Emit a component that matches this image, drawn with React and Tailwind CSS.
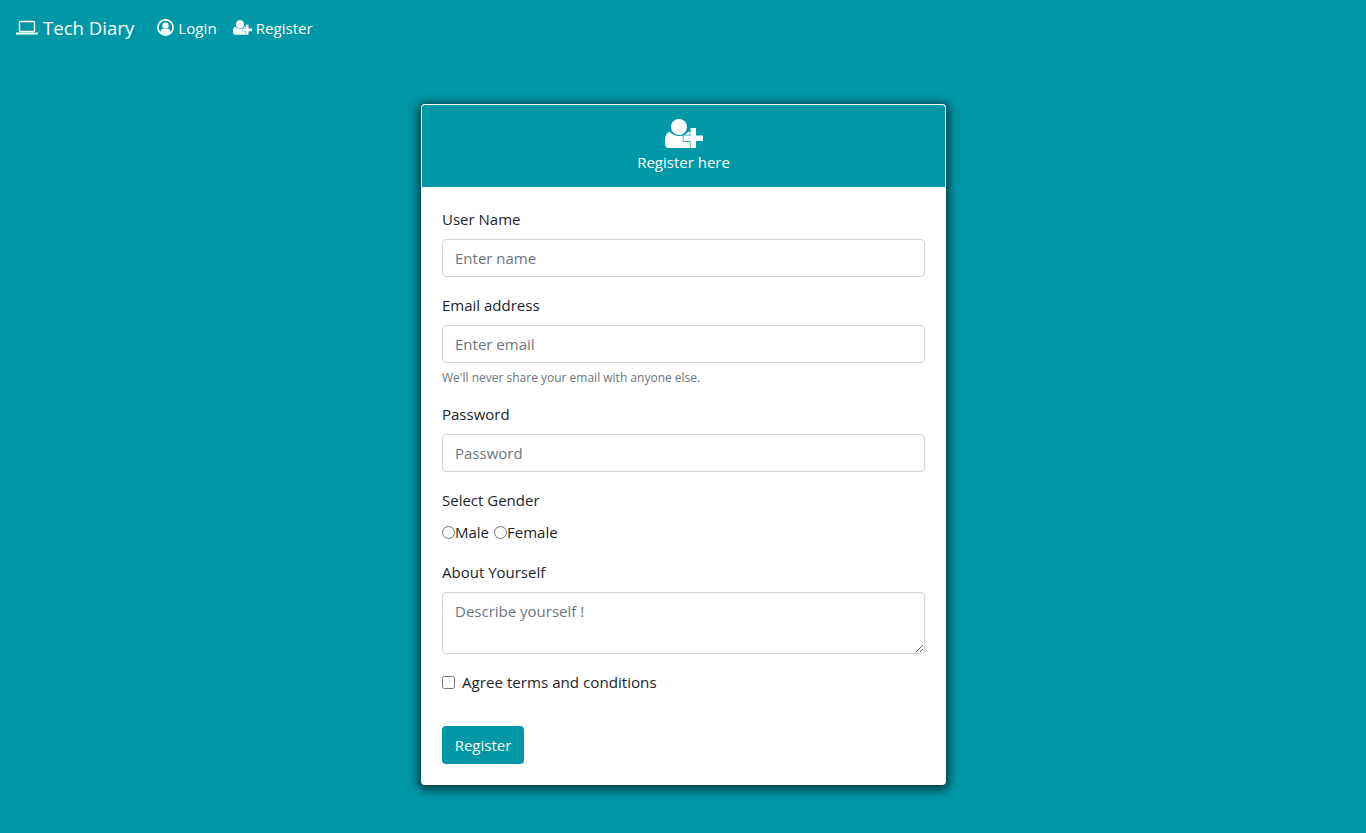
import React from "react";

const font = { fontFamily: '"Open Sans", "Noto Sans", sans-serif' };

function Laptop({ className }) {
  return (
    <svg viewBox="0 0 22 16" className={className} fill="none" stroke="currentColor">
      <rect x="3.5" y="1.5" width="15" height="10" rx="1" strokeWidth="1.4" />
      <path d="M0.5 13.5h21" strokeWidth="2" strokeLinecap="round" />
    </svg>
  );
}

function UserCircle({ className }) {
  return (
    <svg viewBox="0 0 17 17" className={className}>
      <circle cx="8.500" cy="8.500" r="7.600" fill="none" stroke="white" strokeWidth="1.600" />
      <circle cx="8.500" cy="6.600" r="3.200" fill="white" />
      <path d="M3.200 13.200c.5-2.300 2-3.500 3.200-3.700.6.400 1.300.6 2.100.6s1.500-.2 2.100-.6c1.200.2 2.700 1.400 3.200 3.700-1.300 1.400-3.200 2.300-5.300 2.300s-4-.9-5.300-2.300z" fill="white" />
    </svg>
  );
}

function UserPlus({ className }) {
  return (
    <svg viewBox="0 0 38 29" className={className}>
      <circle cx="14" cy="8" r="8" fill="white" />
      <path d="M4.5 12.5C6.5 15 9.5 17 14 17s7.5-2 9.5-4.5c2.5.6 4 3 4 6V29H4C1.500 29 0 27.500 0 25v-4c0-4 1.500-7 4.500-8.500z" fill="white" />
      <path d="M25.500 9h5.500v7.500h7v5.500h-7v7h-5.500v-7h-7v-5.500h7z" fill="white" stroke="#0097a7" strokeWidth="1.300" paintOrder="stroke" />
    </svg>
  );
}

function Field({ label, placeholder, type = "text", hint }) {
  return (
    <div className="mb-4">
      <label className="block mb-2 h-6 leading-6 text-[15px] text-[#212529]">{label}</label>
      <input
        type={type}
        placeholder={placeholder}
        className="block w-full h-[38px] px-3 border border-[#ced4da] rounded text-[15px] bg-white outline-none placeholder:text-[#6c757d]"
      />
      {hint && <small className="block mt-[6px] mb-[-1px] text-[12px] leading-[18px] text-[#6c757d]">{hint}</small>}
    </div>
  );
}

export default function App() {
  return (
    <div className="min-h-[833px] bg-[#0097a7] text-[15px] text-[#212529]" style={font}>
      <nav className="flex items-center h-[56px] pl-4 text-white">
        <a className="flex items-center text-[18.6px] leading-7 mr-[23px]">
          <Laptop className="w-[22px] h-4 mr-[5px]" />
          <span>Tech Diary</span>
        </a>
        <a className="flex items-center text-[15.2px] mr-4">
          <UserCircle className="w-[17px] h-[17px] mr-[4px]" />
          Login
        </a>
        <a className="flex items-center text-[15.1px]">
          <UserPlus className="w-[19px] h-[15px] mr-[4px]" />
          Register
        </a>
      </nav>

      <div className="flex justify-center pt-[48px] pb-12 pl-[1px]">
        <div className="w-[525px] h-[681px] bg-white rounded border border-white/80 shadow-[0_2px_10px_3px_rgba(0,0,0,0.6)] overflow-hidden">
          <div className="h-[82px] bg-[#0097a7] text-white flex flex-col items-center pt-[14px]">
            <UserPlus className="w-[38px] h-[29px]" />
            <span className="text-[15px] leading-[24px] mt-[2px]">Register here</span>
          </div>
          <form className="px-5 pt-5">
            <Field label="User Name" placeholder="Enter name" />
            <Field label="Email address" placeholder="Enter email" type="email" hint="We'll never share your email with anyone else." />
            <Field label="Password" placeholder="Password" type="password" />
            <div className="h-6 leading-6 text-[15px] mb-2">Select Gender</div>
            <div className="flex items-center h-6 mb-4 text-[15px]">
              <input type="radio" name="g" className="w-[13px] h-[13px] m-0" />
              <span>Male</span>
              <input type="radio" name="g" className="w-[13px] h-[13px] m-0 ml-[5px]" />
              <span>Female</span>
            </div>
            <label className="block mb-2 h-6 leading-6 text-[15px]">About Yourself</label>
            <textarea
              placeholder="Describe yourself !"
              className="block w-full h-[62px] px-3 py-[6px] mb-4 border border-[#ced4da] rounded text-[15px] leading-6 outline-none placeholder:text-[#6c757d]"
            />
            <div className="flex items-center h-6 mb-[32px]">
              <input type="checkbox" className="w-[13px] h-[13px] m-0 mr-[7px]" />
              <span className="text-[15.15px]">Agree terms and conditions</span>
            </div>
            <button type="button" className="block h-[38px] w-[82px] rounded bg-[#0097a7] text-white text-[15px]">Register</button>
          </form>
        </div>
      </div>
    </div>
  );
}
